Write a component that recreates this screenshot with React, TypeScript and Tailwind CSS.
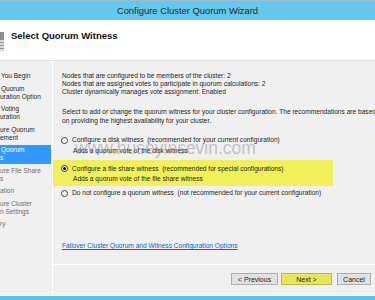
import React from "react";

function Radio({ checked }: { checked?: boolean }) {
  return (
    <span className="w-[7px] h-[7px] rounded-full border border-[#3c3c3c] bg-white flex items-center justify-center shrink-0 -ml-[1px]">
      {checked && <span className="w-[3px] h-[3px] rounded-full bg-[#111]" />}
    </span>
  );
}

type Item = { lines: string[]; state: "done" | "active" | "todo" };

const items: Item[] = [
  { lines: ["You Begin"], state: "done" },
  { lines: ["Quorum", "uration Option"], state: "done" },
  { lines: ["Voting", "uration"], state: "done" },
  { lines: ["ure Quorum", "ement"], state: "done" },
  { lines: ["Quorum", "s"], state: "active" },
  { lines: ["ure File Share", "s"], state: "todo" },
  { lines: ["ation"], state: "todo" },
  { lines: ["ure Cluster", "n Settings"], state: "todo" },
  { lines: ["ry"], state: "todo" },
];

export default function App() {
  return (
    <div className="relative w-[375px] h-[300px] overflow-hidden flex flex-col bg-[#f0f0f0] font-['Liberation_Sans',Arial,sans-serif] text-[#1e1e1e]">
      {/* title bar */}
      <div className="h-[20px] shrink-0 bg-[#65c8ea] border-t border-[#9cbccb] flex items-center justify-center text-[9.4px] leading-none text-[#1b2a30]">
        Configure Cluster Quorum Wizard
      </div>
      {/* header */}
      <div className="h-[41px] shrink-0 bg-white border-b border-[#e2e2e2] flex items-start">
        <div className="mt-[12px] w-[4px] h-[19px] flex flex-col">
          <div className="h-[8px] bg-[#8c8c8c]" />
          <div className="flex-1 bg-[#d8d8d8] flex flex-col justify-around py-[1px]">
            <div className="h-px bg-[#9a9a9a]" />
            <div className="h-px bg-[#9a9a9a]" />
            <div className="h-px bg-[#9a9a9a]" />
          </div>
        </div>
        <div className="ml-[7px] mt-[10px] text-[9.5px] leading-[12px] font-bold text-[#111]">
          Select Quorum Witness
        </div>
      </div>
      {/* body */}
      <div className="flex flex-1 min-h-0">
        <div className="w-[53px] shrink-0 border-r border-white pt-[8px] text-[6.5px] leading-[8px] whitespace-nowrap overflow-hidden">
          {items.map((it, i) => (
            <div
              key={i}
              className={
                "my-[1.5px] py-[1.5px] mr-[1px] " +
                (it.state === "active"
                  ? "bg-[#3399ff] text-white"
                  : it.state === "done"
                  ? "text-[#1e1e1e]"
                  : "text-[#6e6e6e]")
              }
            >
              {it.lines.map((l, j) => (
                <div
                  key={j}
                  className={
                    l === "You Begin" || l === "Quorum" || l === "Voting" ? "pl-[1px]" : ""
                  }
                >
                  {l}
                </div>
              ))}
            </div>
          ))}
        </div>
        <div className="flex-1 min-w-0 flex flex-col pl-[9px] pt-[11px] text-[6.6px] whitespace-nowrap overflow-hidden">
          <div className="leading-[8px]">
            <div>Nodes that are configured to be members of the cluster: 2</div>
            <div>Nodes that are assigned votes to participate in quorum calculations: 2</div>
            <div>Cluster dynamically manages vote assignment: Enabled</div>
          </div>
          <div className="mt-[11px] leading-[9px]">
            <div>
              Select to add or change the quorum witness for your cluster configuration. The recommendations are based
            </div>
            <div>on providing the highest availability for your cluster.</div>
          </div>
          <div className="mt-[10px] h-[10px] flex items-center">
            <Radio />
            <span className="ml-[4px] leading-[8px]">
              Configure a disk witness&nbsp; (recommended for your current configuration)
            </span>
          </div>
          <div className="mt-[2px] pl-[11px] leading-[8px]">Adds a quorum vote of the disk witness</div>
          <div className="mt-[5px] -ml-[9px] pl-[9px] w-[280px] bg-[#f2f05a] pt-[3.5px] pb-[3px]">
            <div className="h-[10px] flex items-center">
              <Radio checked />
              <span className="ml-[4px] leading-[8px]">
                Configure a file share witness&nbsp; (recommended for special configurations)
              </span>
            </div>
            <div className="mt-[1.5px] pl-[11px] leading-[8px]">Adds a quorum vote of the file share witness</div>
          </div>
          <div className="mt-[2px] h-[10px] flex items-center">
            <Radio />
            <span className="ml-[4px] leading-[8px]">
              Do not configure a quorum witness&nbsp; (not recommended for your current configuration)
            </span>
          </div>
          <div className="mt-[44px] leading-[8px] text-[#0a66cc] underline">
            Failover Cluster Quorum and Witness Configuration Options
          </div>
          <div className="mt-auto -ml-[9px] h-px bg-white" />
          <div className="mt-[8px] mb-[10px] flex justify-end pr-[4px] text-[7px] leading-none">
            <div className="w-[47px] h-[12px] mr-[3px] bg-[#e1e1e1] border border-[#adadad] flex items-center justify-center">
              &lt; Previous
            </div>
            <div className="w-[51px] h-[12px] mr-[5px] bg-[#e6e65c] border border-[#b9b94c] flex items-center justify-center">
              Next &gt;
            </div>
            <div className="w-[34px] h-[12px] bg-[#e1e1e1] border border-[#adadad] flex items-center justify-center">
              Cancel
            </div>
          </div>
        </div>
      </div>
      <div className="h-[5px] shrink-0 bg-[#5bc3e8] border-t border-white" />
      {/* watermark */}
      <div className="absolute left-[75px] top-[140px] text-[17.5px] leading-none text-[rgba(120,120,120,0.4)] pointer-events-none whitespace-nowrap">
        www.huseyinsevin.com
      </div>
    </div>
  );
}
